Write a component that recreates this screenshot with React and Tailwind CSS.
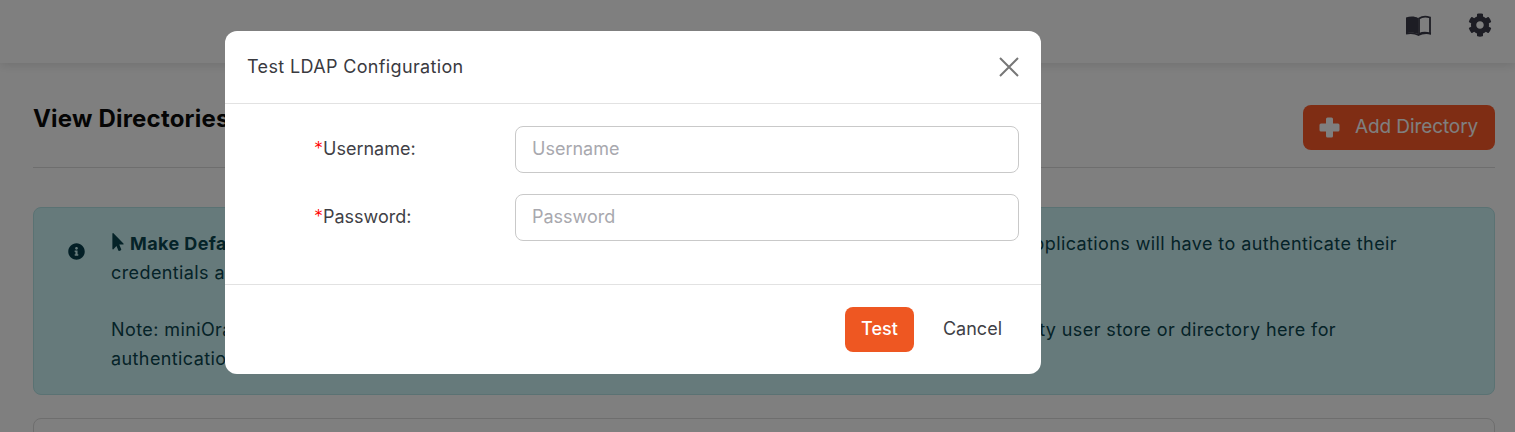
import React from "react";
import { FaCog, FaInfoCircle, FaMousePointer } from "react-icons/fa";

function BookIcon() {
  return (
    <svg width="27" height="21" viewBox="0 0 27 21" className="text-[#3a3a48]">
      <path d="M1 2.5 C5 1 10 1 13 3 V19 C10 17.5 5 17.5 2.5 18 H1 Z" fill="currentColor" />
      <path d="M14 3.5 C17 1.5 22 1.5 25 2.5 V18.5 C22 17.5 17 17.5 14 19 Z" fill="none" stroke="currentColor" strokeWidth="1.8" />
      <path d="M1 18.6 C5 18 10 18 13.5 20 C17 18 22 18 26 18.6" fill="none" stroke="currentColor" strokeWidth="1.6" />
    </svg>
  );
}

function PlusIcon() {
  return (
    <svg width="21" height="21" viewBox="0 0 21 21" className="shrink-0 text-white">
      <rect x="7" y="0.5" width="7" height="20" rx="1.5" fill="currentColor" />
      <rect x="0.5" y="6.5" width="20" height="8" rx="1.5" fill="currentColor" />
    </svg>
  );
}

function Field({ label, type }) {
  return (
    <div className="flex items-center">
      <label className="ml-[89px] w-[201px] pb-[2px] text-left text-[18px] text-[#3f3f46]">
        <span className="font-light text-[#ff0000]">*</span>
        {label}:
      </label>
      <div className="flex-1">
        <input
          type={type}
          placeholder={label}
          className="h-[47px] w-full rounded-[8px] border border-[#c9c9c9] bg-white px-[16px] pb-[2px] text-[18px] outline-none placeholder:text-[#a8a8ae]"
        />
      </div>
    </div>
  );
}

export default function App() {
  return (
    <div
      className="relative h-[432px] w-full overflow-hidden bg-white"
      style={{ fontFamily: '"Inter", "Noto Sans", sans-serif' }}
    >
      <header className="flex h-[63px] items-center justify-end gap-[36px] pr-[23px] pb-[13px] shadow-[0_2px_10px_rgba(0,0,0,0.12)]">
        <BookIcon />
        <FaCog className="h-[24px] w-[24px] text-[#3a3a48]" />
      </header>

      <main className="pt-[42px] pr-[20px] pl-[33px]">
        <div className="flex items-start justify-between border-b border-[#dcdcdc] pb-[17px]">
          <h1 className="text-[24px] leading-[28px] font-bold tracking-[0.2px] text-[#0a0a0a]">View Directories</h1>
          <button className="flex h-[45px] w-[192px] items-center gap-[15px] rounded-[8px] bg-[#fe5a28] pl-[16px] text-[19px] tracking-[-0.1px] text-white">
            <PlusIcon />
            Add Directory
          </button>
        </div>

        <div className="mt-[39px] flex h-[188px] rounded-[8px] border border-[#b4e4e6] bg-[#cdf4f6] pt-[21px] text-[18px] leading-[29px] tracking-[0.4px] text-[#0a4650]">
          <FaInfoCircle className="mt-[14px] ml-[34px] h-[17px] w-[17px] shrink-0 text-[#063f4c]" />
          <div className="ml-[26px]">
            <p className="flex w-[1286px] justify-between">
              <span>
                <FaMousePointer className="mr-[5px] inline h-[18px] w-[14px] align-[-1px]" />
                <b>Make Default:</b> Set a directory as default and all users of your
              </span>
              <span>applications will have to authenticate their</span>
            </p>
            <p>credentials against the default directory.</p>
            <p className="mt-[28px] flex w-[1225px] justify-between">
              <span>Note: miniOrange provides its own user store, but you may also</span>
              <span>party user store or directory here for</span>
            </p>
            <p>authentication.</p>
          </div>
        </div>

        <div className="mt-[23px] h-[60px] rounded-[8px] border border-[#dcdcdc]" />
      </main>

      <div className="absolute inset-0 bg-black/50" />

      <div className="absolute top-[31px] left-[225px] flex h-[343px] w-[816px] flex-col rounded-[12px] bg-white text-[#3f3f46]">
        <div className="flex h-[73px] items-center justify-between border-b border-[#e2e2e2] pr-[22px] pl-[22px]">
          <h2 className="pb-[2px] text-[18px] tracking-[0.35px] text-[#3a3a3f]">Test LDAP Configuration</h2>
          <svg width="20" height="20" viewBox="0 0 20 20" className="text-[#777777]">
            <path d="M1 1 L19 19 M19 1 L1 19" stroke="currentColor" strokeWidth="2" fill="none" />
          </svg>
        </div>
        <div className="flex flex-1 flex-col gap-[21px] pt-[22px] pr-[22px]">
          <Field label="Username" type="text" />
          <Field label="Password" type="password" />
        </div>
        <div className="flex h-[90px] items-center justify-end border-t border-[#e2e2e2] pr-[39px] pb-[1px]">
          <button className="h-[45px] w-[69px] rounded-[8px] bg-[#ee5722] pb-[2px] text-[18px] font-medium text-white">Test</button>
          <button className="ml-[29px] pb-[2px] text-[18px] text-[#3f3f46]">Cancel</button>
        </div>
      </div>
    </div>
  );
}
